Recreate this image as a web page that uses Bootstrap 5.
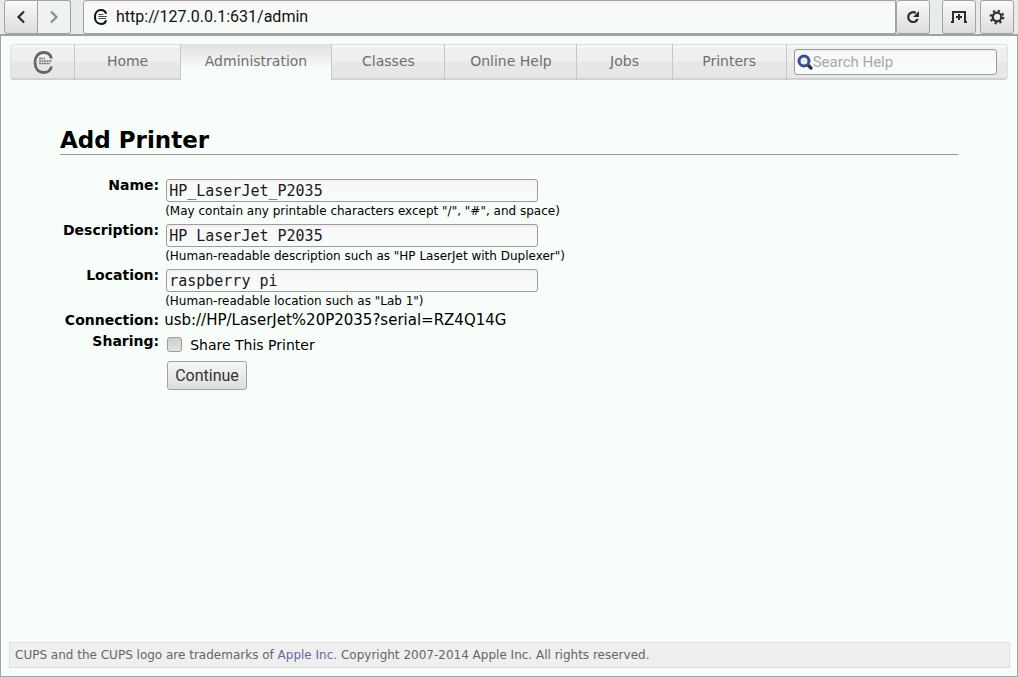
<!DOCTYPE html>
<html lang="en">
<head>
<meta charset="utf-8">
<meta name="viewport" content="width=device-width, initial-scale=1">
<title>Add Printer - CUPS</title>
<link href="https://cdn.jsdelivr.net/npm/bootstrap@5.3.0/dist/css/bootstrap.min.css" rel="stylesheet">
<style>
body { font-family: "DejaVu Sans", sans-serif; font-size: 15px; line-height: 21px; color: #000; background: #e8ece9; }
.toolbar { height: 34px; padding: 0 4px; }
.gap-before { margin-left: 12px; }
.tool { width: 34px; height: 34px; padding: 0; border: 1px solid #a0a3a1; border-radius: 3px; background: linear-gradient(#f8f9f8, #dcdddc); display: flex; align-items: center; justify-content: center; }
.tool:disabled { background: #eef3f0; }
.tool-back { border-radius: 3px 0 0 3px; }
.tool-fwd { border-left: 0; border-radius: 0 3px 3px 0; width: 33px; }
.address { height: 34px; border: 1px solid #a0a3a1; border-radius: 3px 0 0 3px; background: linear-gradient(#f5eff4, #f9f8fa 12%, #f8f9f9 48%, #f7fcf9 55%); padding: 0 9px; }
.address input { border: 0; background: none; outline: 0; padding: 0; font: 16px/24px Roboto, sans-serif; color: #111; min-width: 0; }
.page { border: 1px solid #a0a3a1; border-top-width: 2px; background: #f7fdf9; padding: 8px 9px; }
.tabs { height: 36px; border: 1px solid #dfe1e0; border-bottom: 2px solid #d0d3d1; border-radius: 4px; background: linear-gradient(#f8f8f8 0 2px, #efefef 3px 16px, #e7e7e7 17px); }
.tab { display: flex; justify-content: center; align-items: center; height: 36px; margin-top: -1px; padding-bottom: 2px; border-right: 1px solid #c5c8c6; color: #6e6e6e; text-decoration: none; font-size: 14px; white-space: nowrap; }
.tab.active { background: linear-gradient(#dfe1e0, #e7e9e8 20%, #f3f6f4 55%, #f7fdf9 65%); }
.tab.w-logo { padding-bottom: 0; }
.w-logo { flex: 64 1 0; } .w-home { flex: 105 1 0; } .w-admin { flex: 152 1 0; } .w-classes { flex: 113 1 0; }
.w-help { flex: 132 1 0; } .w-jobs { flex: 95 1 0; } .w-printers { flex: 114 1 0; } .w-search { flex: 205 1 0; }
.search { padding: 0 10px 0 7px; min-width: 0; }
.field { border: 1px solid #9b9e9c; border-radius: 3px; background: linear-gradient(#f3edf2, #f9f7f9 3px, #f8f8f9 10px, #f7fdf9 15px); color: #1a1a1a; }
.searchbox { height: 26px; padding-left: 2px; min-width: 0; }
.searchbox input { border: 0; background: none; outline: 0; padding: 0; font: 15px/22px Roboto, sans-serif; min-width: 0; }
.searchbox input::placeholder { color: #a5aaa7; }
.content { padding: 47px 50px 0; }
h1 { font-size: 23px; line-height: 27px; font-weight: bold; border-bottom: 1px solid #999; margin: 0 0 20px; }
.form-grid { border-collapse: collapse; }
.form-grid th { text-align: right; vertical-align: top; padding: 0 5px 0 3px; font-size: 14px; font-weight: bold; }
.form-grid td { padding: 0; vertical-align: top; }
.form-grid .field { display: block; width: 372px; max-width: 100%; height: 23px; margin: 4px 0 0 2px; padding: 0 2px; font: 15px/21px "DejaVu Sans Mono", monospace; }
.hint { font-size: 12px; line-height: 18px; display: block; padding-left: 1px; }
.share { appearance: none; width: 15px; height: 15px; margin: 0 8px 3px 3px; border: 1px solid #9b9e9c; border-radius: 3px; background: linear-gradient(#cdcfcd, #e3e5e3); }
.share:checked { background: #777; }
.share-label { font-size: 14px; }
.submit { height: 29px; margin: 5px 0 0 3px; padding: 0 7px; border: 1px solid #a0a3a1; border-radius: 3px; background: linear-gradient(#f6f6f6, #dcdddc); font: 16px/27px Roboto, sans-serif; color: #333; }
.legal { border: 1px solid #dddfde; background: #efefef; color: #666; font-size: 12px; line-height: 24px; padding: 0 5px; margin: 0 -2px 0 -1px; }
.legal a { color: #6666aa; text-decoration: none; }
</style>
</head>
<body class="d-flex flex-column min-vh-100">
<header class="toolbar d-flex">
  <button class="tool tool-back" type="button" aria-label="Back"><svg width="16" height="16" fill="none" stroke="#2a302d" stroke-width="2.2"><path d="M11 2.5L5.5 8l5.500 5.500"/></svg></button>
  <button class="tool tool-fwd" type="button" aria-label="Forward" disabled><svg width="16" height="16" fill="none" stroke="#8b908d" stroke-width="2.2"><path d="M5 2.5L10.5 8L5 13.5"/></svg></button>
  <div class="address gap-before d-flex align-items-center flex-grow-1">
    <svg class="flex-shrink-0 me-2" width="15" height="16" viewBox="0 0 20 23"><path d="M18 7C17 3 14.500 1.500 11 1.500C5 1.500 2 6 2 11.500S5 21.500 11 21.500C14.500 21.500 17 20 18 16" fill="none" stroke="#111" stroke-width="3"/><path d="M7 8h7M7 10.8h12M7 13.6h11" stroke="#444" stroke-width="1.5"/></svg>
    <input class="flex-grow-1" type="text" aria-label="Address" value="http://127.0.0.1:631/admin">
  </div>
  <button class="tool" type="button" aria-label="Reload"><svg width="16" height="16" fill="none" stroke="#2a302d" stroke-width="2.2"><path d="M10.800 4A4.900 4.900 0 1 0 12.600 10"/><path d="M14 2v6H8z" fill="#2a302d" stroke="none"/></svg></button>
  <button class="tool gap-before" type="button" aria-label="Add bookmark"><svg width="18" height="16" fill="none" stroke="#2a302d" stroke-width="2"><path d="M1 13h2V3h12v10h2M9 5v6M6 8h6"/></svg></button>
  <button class="tool ms-1" type="button" aria-label="Settings"><svg width="16" height="16" fill="none" stroke="#2a302d"><circle cx="8" cy="8" r="4.3" stroke-width="2.2"/><circle cx="8" cy="8" r="6.3" stroke-width="2.2" stroke-dasharray="2.2 2.748"/></svg></button>
</header>
<div class="page d-flex flex-column flex-grow-1">
  <nav class="tabs d-flex" aria-label="Main">
    <a class="tab w-logo" href="#" aria-label="CUPS"><svg width="20" height="23" viewBox="0 0 20 23"><path d="M18.500 7.500C17.500 3.500 15 1.500 11 1.500C5 1.500 2 6 2 11.500S5 21.500 11 21.500C15 21.500 17.500 19.500 18.500 15.500" fill="none" stroke="#666" stroke-width="2.8"/><path d="M6 7.5h6M6 10h13M6 12.500h11" stroke="#777" stroke-width="1.5" stroke-dasharray="2 .5"/></svg></a>
    <a class="tab w-home" href="#">Home</a>
    <a class="tab active w-admin" href="#" aria-current="page">Administration</a>
    <a class="tab w-classes" href="#">Classes</a>
    <a class="tab w-help" href="#">Online Help</a>
    <a class="tab w-jobs" href="#">Jobs</a>
    <a class="tab w-printers" href="#">Printers</a>
    <form class="search w-search d-flex align-items-center">
      <div class="field searchbox d-flex align-items-center flex-grow-1">
        <svg class="flex-shrink-0" width="16" height="16"><path d="M10.5 10.5l3.5 3.5" stroke="#333" stroke-width="3.2" stroke-linecap="round"/><circle cx="7" cy="7" r="5" fill="#e8edf2" stroke="#34508f" stroke-width="3"/></svg>
        <input class="flex-grow-1" type="text" placeholder="Search Help" aria-label="Search Help">
      </div>
    </form>
  </nav>
  <main class="content flex-grow-1">
    <h1>Add Printer</h1>
    <form>
      <table class="form-grid">
        <tr><th><label for="name">Name:</label></th><td><input class="field" id="name" type="text" value="HP_LaserJet_P2035"><small class="hint">(May contain any printable characters except "/", "#", and space)</small></td></tr>
        <tr><th><label for="desc">Description:</label></th><td><input class="field" id="desc" type="text" value="HP LaserJet P2035"><small class="hint">(Human-readable description such as "HP LaserJet with Duplexer")</small></td></tr>
        <tr><th><label for="loc">Location:</label></th><td><input class="field" id="loc" type="text" value="raspberry pi"><small class="hint">(Human-readable location such as "Lab 1")</small></td></tr>
        <tr><th>Connection:</th><td>usb://HP/LaserJet%20P2035?serial=RZ4Q14G</td></tr>
        <tr><th>Sharing:</th><td><div class="d-flex align-items-center pt-1"><input class="share" type="checkbox" id="share"><label class="share-label" for="share">Share This Printer</label></div></td></tr>
        <tr><th></th><td><button class="submit" type="button">Continue</button></td></tr>
      </table>
    </form>
  </main>
  <footer class="legal">CUPS and the CUPS logo are trademarks of <a href="#">Apple Inc.</a> Copyright 2007-2014 Apple Inc. All rights reserved.</footer>
</div>
<script src="https://cdn.jsdelivr.net/npm/bootstrap@5.3.0/dist/js/bootstrap.bundle.min.js"></script>
</body>
</html>
